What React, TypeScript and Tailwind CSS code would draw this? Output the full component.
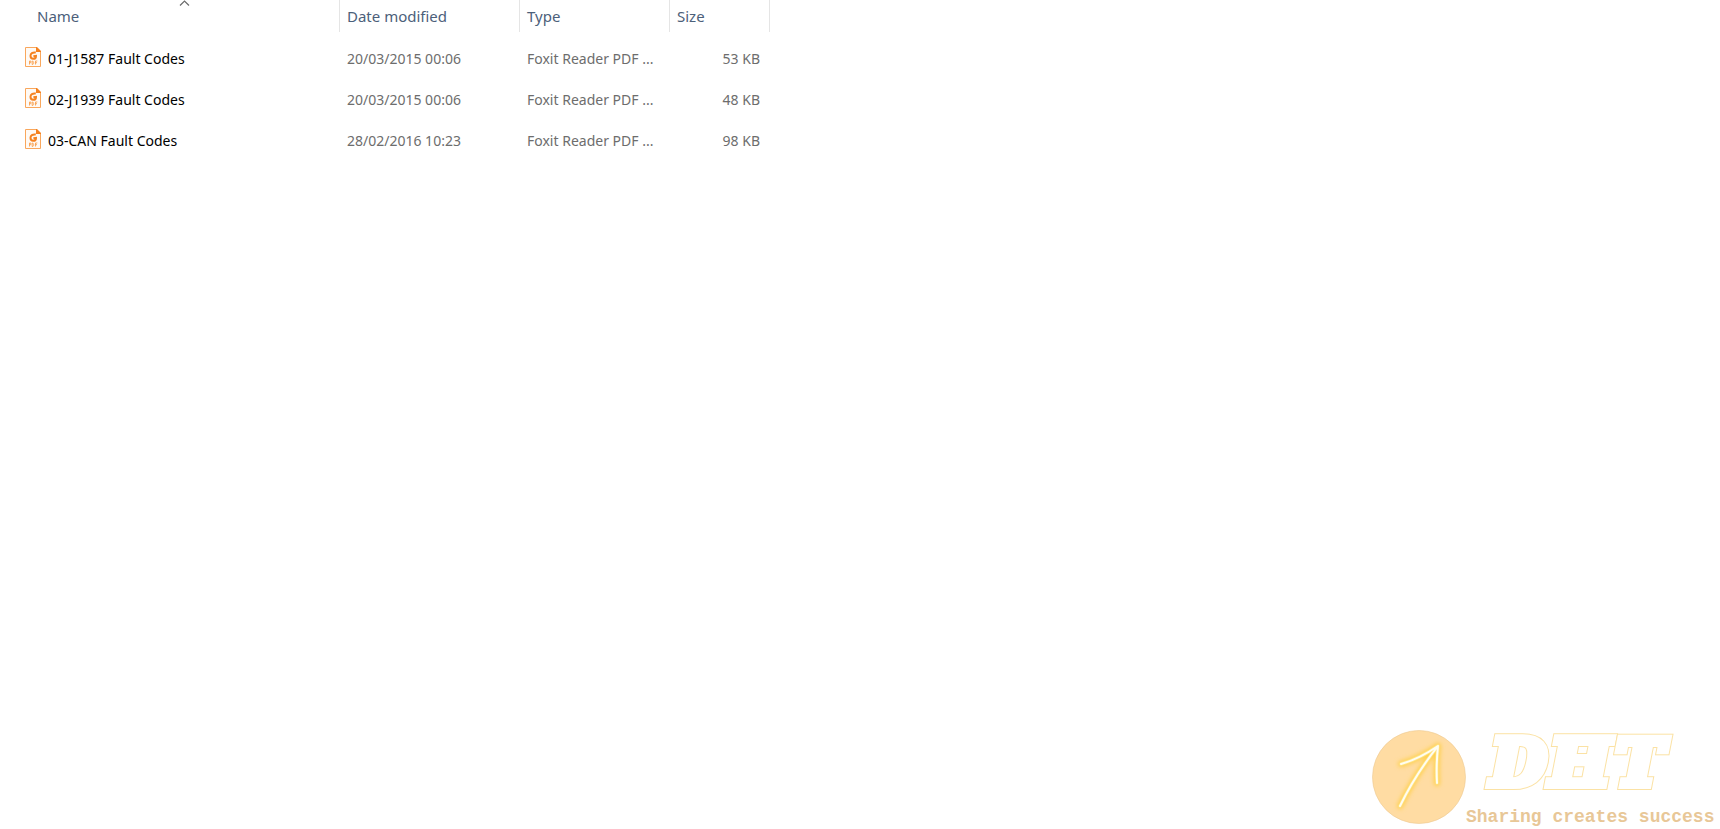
import React from 'react';

const files = [
  { name: '01-J1587 Fault Codes', modified: '20/03/2015 00:06', type: 'Foxit Reader PDF ...', size: '53 KB' },
  { name: '02-J1939 Fault Codes', modified: '20/03/2015 00:06', type: 'Foxit Reader PDF ...', size: '48 KB' },
  { name: '03-CAN Fault Codes', modified: '28/02/2016 10:23', type: 'Foxit Reader PDF ...', size: '98 KB' },
];

const letters = [
  { char: 'D', x: 7 },
  { char: 'H', x: 66 },
  { char: 'T', x: 132 },
];

const PdfIcon = () => (
  <svg width="16" height="20" viewBox="0 0 16 20" className="shrink-0" aria-hidden="true">
    <path d="M0.5 0.5H11.5V4.5H15.5V19.5H0.5Z" fill="#fffaf5" stroke="#f9a75c" />
    <path d="M12 0L16 4V5H11V0Z" fill="#f58220" />
    <path d="M10.800 5.500C7.500 5 5.500 6.600 5.500 8.800C5.500 10.800 6.800 11.800 8.200 11.800C9.900 11.800 11 10.600 11 8.900L8.400 9.300" fill="none" stroke="#f58220" strokeWidth="2" />
    <path d="M4.500 17.500v-3.500h1.300v1.700H4.500M7.200 14v3.500c2 .2 2-3.500 0-3.500M10.500 17.500v-3.500h1.800M10.500 15.700h1.500" fill="none" stroke="#f9a75c" strokeWidth="1" />
  </svg>
);

const FileTable = () => (
  <table className="w-[770px] table-fixed border-collapse text-left text-[14px] leading-5">
    <colgroup>
      <col className="w-[340px]" />
      <col className="w-[180px]" />
      <col className="w-[150px]" />
      <col className="w-[100px]" />
    </colgroup>
    <thead className="text-[15px] text-[#4c607a]">
      <tr>
        <th className="p-0 pb-[7px] font-normal">
          <button className="relative block h-8 w-full border-r border-[#e5e5e5] pl-[37px] text-left">
            Name
            {/* sort direction */}
            <svg width="11" height="7" viewBox="0 0 11 7" className="absolute top-0 left-[179px]" aria-hidden="true">
              <path d="M1 5.500L5.500 1L10 5.500" fill="none" stroke="#6b6b6b" strokeWidth="1.200" />
            </svg>
          </button>
        </th>
        {['Date modified', 'Type', 'Size'].map((label) => (
          <th key={label} className="p-0 pb-[7px] font-normal">
            <button className="block h-8 w-full border-r border-[#e5e5e5] pl-[7px] text-left">{label}</button>
          </th>
        ))}
      </tr>
    </thead>
    <tbody className="text-[#6d6d6d]">
      {files.map((file) => (
        <tr key={file.name} className="h-[41px]">
          <td className="p-0 pb-1 pl-[25px] text-black">
            <div className="flex items-start gap-[7px]">
              <PdfIcon />
              <span className="pt-[2px]">{file.name}</span>
            </div>
          </td>
          <td className="p-0 pb-[2px] pl-[7px]">{file.modified}</td>
          <td className="p-0 pb-[2px] pl-[7px] whitespace-nowrap">{file.type}</td>
          <td className="p-0 pr-[10px] pb-[2px] text-right">{file.size}</td>
        </tr>
      ))}
    </tbody>
  </table>
);

const ArrowBadge = () => (
  <svg width="94" height="94" viewBox="0 0 94 94" className="mb-[5px] shrink-0" aria-hidden="true">
    <defs>
      <filter id="glow" x="-30%" y="-30%" width="160%" height="160%">
        <feGaussianBlur stdDeviation="2" />
      </filter>
    </defs>
    <circle cx="47" cy="47" r="46.500" fill="#ffdca3" stroke="#ecca92" strokeWidth="0.6" />
    <g fill="none" strokeLinecap="round" strokeLinejoin="round">
      <path d="M28 76Q43 45 66 16M29 34Q47 29 66 16Q64 35 65 53" stroke="#ffd04f" strokeWidth="6" filter="url(#glow)" />
      <path d="M28 76Q43 45 66 16M29 34Q47 29 66 16Q64 35 65 53" stroke="#ffe584" strokeWidth="3.500" />
      <path d="M28 76Q43 45 66 16M29 34Q47 29 66 16Q64 35 65 53" stroke="#fffdf2" strokeWidth="2" />
    </g>
  </svg>
);

// Each letter is a wide yellow stroke with a slightly narrower white one on top,
// which leaves a thin outline around a heavy slab shape.
const Wordmark = () => (
  <svg width="200" height="76" viewBox="0 0 200 76" className="ml-5 block overflow-visible" role="img" aria-label="DHT">
    <g className="font-['DejaVu_Serif',serif] text-[64px] font-bold italic" strokeLinejoin="miter">
      {letters.map(({ char, x }) => (
        <g key={char}>
          <text x={x} y="56" fill="#fbe2a4" stroke="#fbe2a4" strokeWidth="10">{char}</text>
          <text x={x} y="56" fill="#ffffff" stroke="#ffffff" strokeWidth="8" aria-hidden="true">{char}</text>
        </g>
      ))}
    </g>
  </svg>
);

const App = () => {
  return (
    <div className="flex min-h-screen flex-col justify-between bg-white font-['Noto_Sans',sans-serif]">
      <FileTable />
      <footer className="flex items-end justify-end pr-[2px]">
        <ArrowBadge />
        <div className="-ml-[2px] w-[254px]">
          <Wordmark />
          <p className="pl-[2px] font-['Liberation_Mono',monospace] text-[18px] leading-6 font-bold whitespace-nowrap text-[#e8c797]">
            Sharing creates success
          </p>
        </div>
      </footer>
    </div>
  );
};

export default App;
